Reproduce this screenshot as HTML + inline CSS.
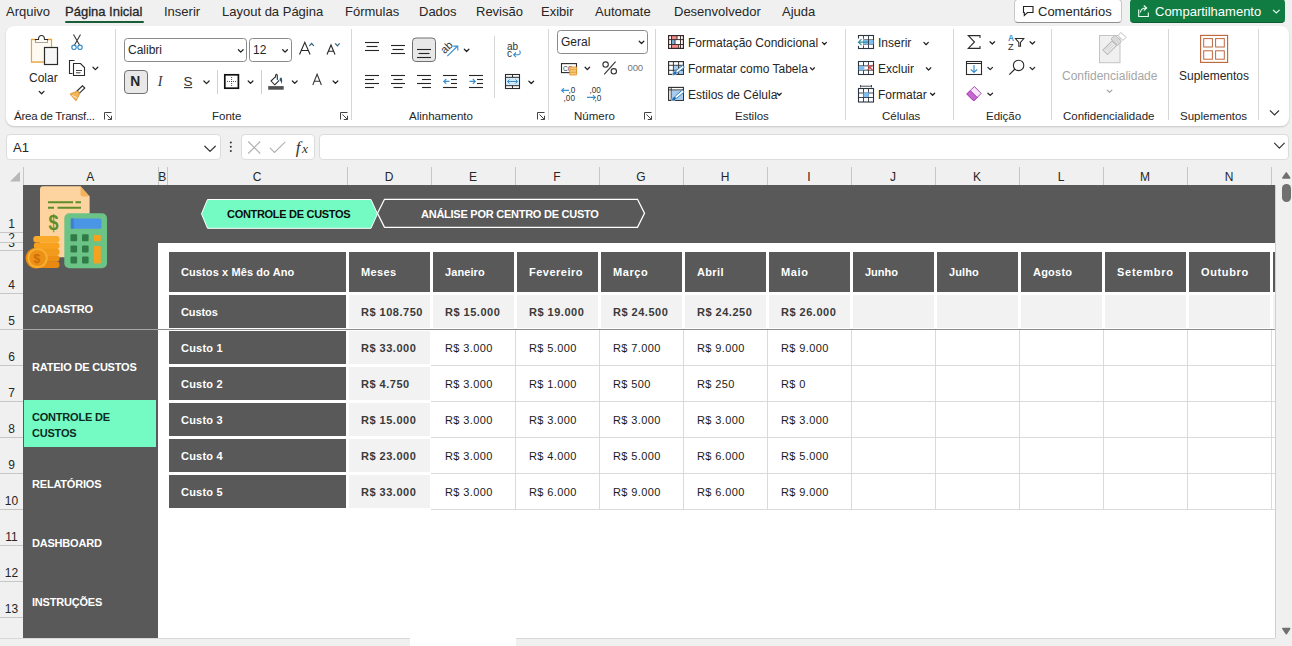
<!DOCTYPE html><html><head><meta charset="utf-8"><style>
*{box-sizing:border-box;margin:0;padding:0}
html,body{width:1292px;height:646px;overflow:hidden;background:#f0f0f0;font-family:"Liberation Sans",sans-serif;color:#262626}
.a{position:absolute}
.t{position:absolute;white-space:nowrap}
.tab{position:absolute;top:4px;font-size:13px;line-height:15px;white-space:nowrap;color:#262626}
#ribbon{position:absolute;left:6px;top:26px;width:1283px;height:100px;background:#fff;border-radius:8px;box-shadow:0 1px 2px rgba(0,0,0,.18)}
.sep{position:absolute;width:1px;background:#d6d6d6}
.glbl{position:absolute;top:110px;font-size:11.5px;line-height:12px;white-space:nowrap;color:#262626}
.rt{position:absolute;font-size:12px;line-height:14px;white-space:nowrap;color:#262626}
.box{position:absolute;background:#fff;border:1px solid #dcdcdc;border-radius:4px}
.ch{position:absolute;top:168px;height:18px;font-size:12px;line-height:18px;text-align:center;color:#262626}
.cs{position:absolute;top:167px;width:1px;height:18px;background:#c6c6c6}
.rh{position:absolute;left:0;width:23px;text-align:center;font-size:12px;line-height:14px;color:#262626}
.rs{position:absolute;left:0;width:23px;height:1px;background:#c6c6c6}
.dk{position:absolute;background:#595959}
.lg{position:absolute;background:#f2f2f2}
.gl{position:absolute;background:#dadada}
.nav{position:absolute;left:32px;font-size:11px;font-weight:bold;color:#fff;line-height:15.6px;letter-spacing:-0.2px;white-space:nowrap}
.hc{position:absolute;font-size:11px;font-weight:bold;color:#fff;line-height:14px;white-space:nowrap}
.nb{position:absolute;font-size:11px;font-weight:bold;color:#3a3a3a;line-height:14px;white-space:nowrap;letter-spacing:0.5px}
.nr{position:absolute;font-size:11px;color:#1a1a1a;line-height:14px;white-space:nowrap;letter-spacing:0.4px}
</style></head><body>
<div class="tab" style="left:6px">Arquivo</div>
<div class="tab" style="left:65px;-webkit-text-stroke:0.3px #262626">Página Inicial</div>
<div class="tab" style="left:164px">Inserir</div>
<div class="tab" style="left:222px">Layout da Página</div>
<div class="tab" style="left:345px">Fórmulas</div>
<div class="tab" style="left:419px">Dados</div>
<div class="tab" style="left:476px">Revisão</div>
<div class="tab" style="left:541px">Exibir</div>
<div class="tab" style="left:595px">Automate</div>
<div class="tab" style="left:674px">Desenvolvedor</div>
<div class="tab" style="left:782px">Ajuda</div>
<div class="a" style="left:65px;top:20.5px;width:79px;height:2.5px;background:#1a5e38;border-radius:1px"></div>
<div class="a" style="left:1014px;top:-1px;width:108px;height:24px;border:1px solid #c8c8c8;border-bottom-color:#8f8f8f;border-radius:4px;background:#fff"></div>
<div class="tab" style="left:1038px">Comentários</div>
<div class="a" style="left:1130px;top:-1px;width:155px;height:24px;background:#107c41;border-radius:4px;border-bottom:1px solid #0b5e31"></div>
<div class="tab" style="left:1155px;color:#fff">Compartilhamento</div>
<div id="ribbon"></div>
<div class="sep" style="left:115px;top:29px;height:91px"></div>
<div class="sep" style="left:351px;top:29px;height:91px"></div>
<div class="sep" style="left:548px;top:29px;height:91px"></div>
<div class="sep" style="left:655px;top:29px;height:91px"></div>
<div class="sep" style="left:845px;top:29px;height:91px"></div>
<div class="sep" style="left:953px;top:29px;height:91px"></div>
<div class="sep" style="left:1051px;top:29px;height:91px"></div>
<div class="sep" style="left:1168px;top:29px;height:91px"></div>
<div class="sep" style="left:1258px;top:29px;height:91px"></div>
<div class="glbl" style="left:14px;letter-spacing:-0.25px">Área de Transf...</div>
<div class="glbl" style="left:212px">Fonte</div>
<div class="glbl" style="left:409px">Alinhamento</div>
<div class="glbl" style="left:574px">Número</div>
<div class="glbl" style="left:735px">Estilos</div>
<div class="glbl" style="left:882px">Células</div>
<div class="glbl" style="left:986px">Edição</div>
<div class="glbl" style="left:1063px">Confidencialidade</div>
<div class="glbl" style="left:1180px">Suplementos</div>
<div class="rt" style="left:29px;top:71px;font-size:12px;color:#262626">Colar</div>
<div class="rt" style="left:128px;top:43px;font-size:12px;color:#262626">Calibri</div>
<div class="rt" style="left:253px;top:43px;font-size:12px;color:#262626">12</div>
<div class="rt" style="left:561px;top:35px;font-size:12px;color:#262626">Geral</div>
<div class="rt" style="left:688px;top:35.5px;font-size:12px;color:#262626">Formatação Condicional</div>
<div class="rt" style="left:688px;top:61.5px;font-size:12px;color:#262626">Formatar como Tabela</div>
<div class="rt" style="left:688px;top:87.5px;font-size:12px;color:#262626">Estilos de Célula</div>
<div class="rt" style="left:878px;top:35.5px;font-size:12px;color:#262626">Inserir</div>
<div class="rt" style="left:878px;top:61.5px;font-size:12px;color:#262626">Excluir</div>
<div class="rt" style="left:878px;top:87.5px;font-size:12px;color:#262626">Formatar</div>
<div class="rt" style="left:1062px;top:69px;font-size:12px;color:#a6a6a6">Confidencialidade</div>
<div class="rt" style="left:1179px;top:69px;font-size:12px;color:#262626">Suplementos</div>
<div class="box" style="left:6px;top:134px;width:215px;height:26px"></div>
<div class="t" style="left:13px;top:141px;font-size:13px;line-height:14px">A1</div>
<div class="box" style="left:241px;top:134px;width:74px;height:26px"></div>
<div class="box" style="left:319px;top:134px;width:970px;height:26px"></div>
<div class="a" style="left:0;top:167px;width:1275px;height:18px;background:#f0f0f0"></div>
<div class="ch" style="left:23px;width:134.5px">A</div>
<div class="cs" style="left:157.5px"></div>
<div class="ch" style="left:157.5px;width:9.5px">B</div>
<div class="cs" style="left:167px"></div>
<div class="ch" style="left:167px;width:180px">C</div>
<div class="cs" style="left:347px"></div>
<div class="ch" style="left:347px;width:84px">D</div>
<div class="cs" style="left:431px"></div>
<div class="ch" style="left:431px;width:84px">E</div>
<div class="cs" style="left:515px"></div>
<div class="ch" style="left:515px;width:84px">F</div>
<div class="cs" style="left:599px"></div>
<div class="ch" style="left:599px;width:84px">G</div>
<div class="cs" style="left:683px"></div>
<div class="ch" style="left:683px;width:84px">H</div>
<div class="cs" style="left:767px"></div>
<div class="ch" style="left:767px;width:84px">I</div>
<div class="cs" style="left:851px"></div>
<div class="ch" style="left:851px;width:84px">J</div>
<div class="cs" style="left:935px"></div>
<div class="ch" style="left:935px;width:84px">K</div>
<div class="cs" style="left:1019px"></div>
<div class="ch" style="left:1019px;width:84px">L</div>
<div class="cs" style="left:1103px"></div>
<div class="ch" style="left:1103px;width:84px">M</div>
<div class="cs" style="left:1187px"></div>
<div class="ch" style="left:1187px;width:84px">N</div>
<div class="cs" style="left:1271px"></div>
<div class="cs" style="left:23px"></div>
<svg class="a" style="left:0;top:0" width="1292" height="185" viewBox="0 0 1292 185"><path d="M35.5 39.5 H31.5 V62 H44" fill="none" stroke="#e9a53a" stroke-width="1.3"/><path d="M47.5 39.5 H51.5 V47" fill="none" stroke="#e9a53a" stroke-width="1.3"/><path d="M35.5 42.5 V39.5 H38.5 Q38.5 35.5 41.5 35.5 Q44.5 35.5 44.5 39.5 H47.5 V42.5 Z" fill="#fff" stroke="#2b2b2b" stroke-width="1.1"/><rect x="32.2" y="40.2" width="18.6" height="21" fill="#fdf6ea" opacity="0.6"/><rect x="44.5" y="47.5" width="13" height="17" fill="#f7f7f7" stroke="#2b2b2b" stroke-width="1.2"/><path d="M39.199999999999996 91.4 L41.599999999999994 93.80000000000001 L43.99999999999999 91.4" fill="none" stroke="#222" stroke-width="1.25" stroke-linecap="round" stroke-linejoin="round"/><path d="M73.5 34.5 L79.5 45 M80.5 34.5 L74.5 45" stroke="#3a3a3a" stroke-width="1.1" fill="none"/><circle cx="74" cy="47.3" r="2.2" fill="none" stroke="#3a8fd0" stroke-width="1.2"/><circle cx="80" cy="47.3" r="2.2" fill="none" stroke="#3a8fd0" stroke-width="1.2"/><path d="M74.5 60.5 H69.5 V73.5 H72.5" fill="none" stroke="#2b2b2b" stroke-width="1.1"/><path d="M73.5 63.5 H80.5 L84.5 67.5 V75.5 H73.5 Z" fill="#fff" stroke="#2b2b2b" stroke-width="1.1"/><path d="M76 70.5 H82 M76 72.8 H80.5" stroke="#2b2b2b" stroke-width="0.9"/><path d="M93.0 67.2 L95.4 69.60000000000001 L97.8 67.2" fill="none" stroke="#222" stroke-width="1.25" stroke-linecap="round" stroke-linejoin="round"/><path d="M77 91 L82.5 85.8 L84.8 88 L79.3 93.3 Z" fill="#fff" stroke="#2b2b2b" stroke-width="1.1"/><path d="M70 94 L77.5 91 L79.8 93.5 L76 100.8 Z" fill="#f2b45a" stroke="#e39a35" stroke-width="1"/><path d="M72.5 95.5 L77 98" stroke="#fff" stroke-width="0.8"/><rect x="124.5" y="38.5" width="122" height="23" rx="3" fill="none" stroke="#8a8a8a" stroke-width="1"/><path d="M238.4 49.7 L240.75 52.1 L243.1 49.7" fill="none" stroke="#222" stroke-width="1.25" stroke-linecap="round" stroke-linejoin="round"/><rect x="249.5" y="38.5" width="42" height="23" rx="3" fill="none" stroke="#8a8a8a" stroke-width="1"/><path d="M282.7 49.7 L285.05 52.1 L287.4 49.7" fill="none" stroke="#222" stroke-width="1.25" stroke-linecap="round" stroke-linejoin="round"/><path d="M299.5 54.5 L304.8 42.3 L310.1 54.5 M301.3 50.5 H308.3" fill="none" stroke="#262626" stroke-width="1.1"/><path d="M309.4 45.8 L311.6 43.4 L313.8 45.8" fill="none" stroke="#35607e" stroke-width="1.25"/><path d="M327 54.5 L331 45 L335 54.5 M328.4 51.2 H333.6" fill="none" stroke="#262626" stroke-width="1.1"/><path d="M335.2 43.4 L337.4 45.8 L339.6 43.4" fill="none" stroke="#35607e" stroke-width="1.25"/><rect x="124.5" y="70.5" width="23" height="23" rx="3.5" fill="#e8e8e8" stroke="#707070" stroke-width="1"/><text x="130.3" y="86.2" font-family="Liberation Sans" font-weight="bold" font-size="13.8" fill="#262626">N</text><text x="157.8" y="86.2" font-family="Liberation Serif" font-style="italic" font-size="14" fill="#333">I</text><text x="183.6" y="86.2" font-family="Liberation Sans" font-size="13.5" fill="#333">S</text><path d="M184 87.6 H192.2" stroke="#333" stroke-width="1.1"/><path d="M203.9 81.0 L206.5 83.6 L209.1 81.0" fill="none" stroke="#222" stroke-width="1.25" stroke-linecap="round" stroke-linejoin="round"/><rect x="224.8" y="74.8" width="13.6" height="13.4" fill="#fff" stroke="#111" stroke-width="1.7"/><path d="M231.6 77 V86.5 M227 81.5 H236.5" stroke="#444" stroke-width="0.9" stroke-dasharray="1 1"/><path d="M248.20000000000002 81.0 L250.55 83.4 L252.9 81.0" fill="none" stroke="#222" stroke-width="1.25" stroke-linecap="round" stroke-linejoin="round"/><path d="M275.6 76.6 L271 81 L274.8 84.8 L279.2 80.4" fill="none" stroke="#2b2b2b" stroke-width="1.05" stroke-linejoin="round"/><path d="M275.6 77 V75.2 Q276.4 73.6 277.3 75.2 V79.6" fill="none" stroke="#2b2b2b" stroke-width="1.05" stroke-linecap="round"/><path d="M279.4 79.3 Q280.6 76.6 281.8 78 Q282.8 80.2 281.4 84.3 Q281.2 81 280 80.6 Z" fill="#1f5a80"/><rect x="268.2" y="86.1" width="15.5" height="3.6" fill="#505050"/><path d="M292.4 81.0 L294.75 83.4 L297.09999999999997 81.0" fill="none" stroke="#222" stroke-width="1.25" stroke-linecap="round" stroke-linejoin="round"/><path d="M312.8 85 L317.1 74.2 L321.4 85 M314.3 81.3 H319.9" fill="none" stroke="#333" stroke-width="1.05"/><path d="M333.09999999999997 81.0 L335.45 83.4 L337.79999999999995 81.0" fill="none" stroke="#222" stroke-width="1.25" stroke-linecap="round" stroke-linejoin="round"/><path d="M217.5 70 V94 M261.5 70 V94" stroke="#d0d0d0" stroke-width="1"/><path d="M365 42.5 H379" stroke="#262626" stroke-width="1.1"/><path d="M366.5 46.5 H377.5" stroke="#262626" stroke-width="1.1"/><path d="M365 50.5 H379" stroke="#262626" stroke-width="1.1"/><path d="M391 45.5 H405" stroke="#262626" stroke-width="1.1"/><path d="M392.5 49.5 H403.5" stroke="#262626" stroke-width="1.1"/><path d="M391 53.5 H405" stroke="#262626" stroke-width="1.1"/><rect x="412.5" y="38" width="23" height="23.5" rx="3.5" fill="#e8e8e8" stroke="#707070" stroke-width="1"/><path d="M417 49.5 H431" stroke="#262626" stroke-width="1.1"/><path d="M418.5 53.5 H429.5" stroke="#262626" stroke-width="1.1"/><path d="M417 57.5 H431" stroke="#262626" stroke-width="1.1"/><text x="0" y="0" transform="translate(444.8 54.3) rotate(-45)" font-family="Liberation Sans" font-size="11" fill="#333">ab</text><path d="M447.3 56.2 L457.6 46 M453.2 46.1 H457.8 V50.6" fill="none" stroke="#3a8fd0" stroke-width="1.1"/><path d="M464.29999999999995 49.2 L466.59999999999997 51.5 L468.9 49.2" fill="none" stroke="#222" stroke-width="1.25" stroke-linecap="round" stroke-linejoin="round"/><path d="M365 75.5 H379" stroke="#262626" stroke-width="1.1"/><path d="M365 79.5 H374" stroke="#262626" stroke-width="1.1"/><path d="M365 83.5 H379" stroke="#262626" stroke-width="1.1"/><path d="M365 87.5 H374" stroke="#262626" stroke-width="1.1"/><path d="M391 75.5 H405" stroke="#262626" stroke-width="1.1"/><path d="M393.5 79.5 H402.5" stroke="#262626" stroke-width="1.1"/><path d="M391 83.5 H405" stroke="#262626" stroke-width="1.1"/><path d="M393.5 87.5 H402.5" stroke="#262626" stroke-width="1.1"/><path d="M417 75.5 H431" stroke="#262626" stroke-width="1.1"/><path d="M422 79.5 H431" stroke="#262626" stroke-width="1.1"/><path d="M417 83.5 H431" stroke="#262626" stroke-width="1.1"/><path d="M422 87.5 H431" stroke="#262626" stroke-width="1.1"/><path d="M443 75.5 H457" stroke="#262626" stroke-width="1.1"/><path d="M451 79.5 H457" stroke="#262626" stroke-width="1.1"/><path d="M451 83.5 H457" stroke="#262626" stroke-width="1.1"/><path d="M443 87.5 H457" stroke="#262626" stroke-width="1.1"/><path d="M449.5 81.4 H443.8 M446.3 79 L443.8 81.4 L446.3 83.8" fill="none" stroke="#3a8fd0" stroke-width="1.1"/><path d="M469 75.5 H483" stroke="#262626" stroke-width="1.1"/><path d="M477 79.5 H483" stroke="#262626" stroke-width="1.1"/><path d="M477 83.5 H483" stroke="#262626" stroke-width="1.1"/><path d="M469 87.5 H483" stroke="#262626" stroke-width="1.1"/><path d="M469.5 81.4 H475.3 M472.8 79 L475.3 81.4 L472.8 83.8" fill="none" stroke="#3a8fd0" stroke-width="1.1"/><path d="M494.5 36 V98" stroke="#d6d6d6" stroke-width="1"/><text x="507" y="49.6" font-family="Liberation Sans" font-size="10" fill="#333">ab</text><text x="507" y="56.6" font-family="Liberation Sans" font-size="10" fill="#333">c</text><path d="M519.5 50.5 Q521.5 53.5 518.5 54.8 H513.8 M516 52.5 L513.6 54.8 L516 57.2" fill="none" stroke="#3a8fd0" stroke-width="1.1"/><rect x="505.5" y="74.5" width="14" height="14" fill="#fff" stroke="#2b2b2b" stroke-width="1.1"/><rect x="506" y="77.3" width="13" height="8.4" fill="#d3e9f8"/><path d="M505.5 77.3 H519.5 M505.5 85.7 H519.5 M512.5 74.5 V77.3 M512.5 85.7 V88.5" stroke="#2b2b2b" stroke-width="1"/><path d="M507.5 81.5 H517.5 M509.5 79.5 L507.5 81.5 L509.5 83.5 M515.5 79.5 L517.5 81.5 L515.5 83.5" fill="none" stroke="#3a8fd0" stroke-width="1"/><path d="M528.9 81.2 L531.25 83.5 L533.6 81.2" fill="none" stroke="#222" stroke-width="1.25" stroke-linecap="round" stroke-linejoin="round"/><rect x="557.5" y="30.5" width="90" height="23" rx="3" fill="none" stroke="#8a8a8a" stroke-width="1"/><path d="M639.1999999999999 41.2 L641.4999999999999 43.5 L643.8 41.2" fill="none" stroke="#222" stroke-width="1.25" stroke-linecap="round" stroke-linejoin="round"/><rect x="561.5" y="63.6" width="15" height="9" fill="#fff" stroke="#2b2b2b" stroke-width="1.1"/><text x="563" y="71" font-family="Liberation Sans" font-size="6.5" fill="#333">CC</text><path d="M569.8 67 H576.5 V75 H569.8 Z" fill="#f8c87a" stroke="#e39a35" stroke-width="0.9"/><path d="M569.8 69.6 H576.5 M569.8 72.3 H576.5" stroke="#e39a35" stroke-width="0.8"/><path d="M585.1 67.2 L587.35 69.60000000000001 L589.6 67.2" fill="none" stroke="#222" stroke-width="1.25" stroke-linecap="round" stroke-linejoin="round"/><circle cx="605.6" cy="64.6" r="2.7" fill="none" stroke="#333" stroke-width="1.1"/><circle cx="613.8" cy="71.3" r="2.7" fill="none" stroke="#333" stroke-width="1.1"/><path d="M615.6 61.6 L604.2 74.4" stroke="#333" stroke-width="1.1"/><text x="627.5" y="71" font-family="Liberation Sans" font-size="9.6" fill="#777" letter-spacing="-0.2">000</text><path d="M569 90.4 H561.6 M564 88.2 L561.6 90.4 L564 92.6" fill="none" stroke="#3a8fd0" stroke-width="1.1"/><text x="568.6" y="92.5" font-family="Liberation Sans" font-size="8.2" fill="#333">,0</text><text x="563.6" y="101" font-family="Liberation Sans" font-size="8.2" fill="#333">,00</text><text x="589.5" y="92.5" font-family="Liberation Sans" font-size="8.2" fill="#333">,00</text><path d="M587 97.4 H595.4 M593 95.2 L595.4 97.4 L593 99.6" fill="none" stroke="#3a8fd0" stroke-width="1.1"/><text x="594.6" y="101" font-family="Liberation Sans" font-size="8.2" fill="#333">,0</text><rect x="672" y="36" width="4.8" height="3.4" fill="#f58a8a"/><rect x="672" y="45" width="6.4" height="3.2" fill="#f58a8a"/><rect x="672" y="40" width="2.8" height="4.3" fill="#6fb0d8"/><rect x="668.6" y="35.6" width="14.8" height="12.8" fill="none" stroke="#3a2626" stroke-width="1.2"/><path d="M668.6 39.6 H683.4 M668.6 44.5 H683.4 M671.5 35.6 V48.4 M680.5 35.6 V48.4 M677 35.6 V39.6 M675 39.6 V44.5 M678.7 44.5 V48.4" stroke="#3a2626" stroke-width="0.95"/><rect x="668.6" y="61.6" width="14.8" height="12.8" fill="#fff" stroke="#2b2b2b" stroke-width="1.1"/><rect x="673.8" y="65.6" width="9.2" height="8.4" fill="#a6cdf0"/><path d="M668.6 65.3 H683.4 M668.6 70.3 H683.4 M673.4 61.6 V74.4 M678.6 61.6 V74.4" stroke="#2b2b2b" stroke-width="0.9"/><g transform="translate(672.2 75.2) rotate(-38)"><path d="M0 0.2 Q1.5 -2.6 5.2 -1.7 L5.2 1.7 Q2 2.4 0 0.2 Z" fill="#1f6fb5" stroke="#fff" stroke-width="0.5"/><rect x="5.2" y="-1.3" width="9.3" height="2.6" rx="1" fill="#fff" stroke="#2f7fc0" stroke-width="0.9"/></g><rect x="668.6" y="87.4" width="14.8" height="13" fill="#fff" stroke="#2b2b2b" stroke-width="1.1"/><rect x="671.8" y="90.3" width="11.2" height="9.7" fill="#a6cdf0"/><path d="M668.6 89.9 H683.4 M671.2 87.4 V100.4" stroke="#2b2b2b" stroke-width="0.9"/><g transform="translate(671.5 100.9) rotate(-40)"><path d="M0 0.2 Q1.5 -2.6 5.2 -1.7 L5.2 1.7 Q2 2.4 0 0.2 Z" fill="#1f6fb5" stroke="#fff" stroke-width="0.5"/><rect x="5.2" y="-1.3" width="10.3" height="2.6" rx="1" fill="#fff" stroke="#2f7fc0" stroke-width="0.9"/></g><path d="M822.4 42.400000000000006 L824.4 44.50000000000001 L826.4 42.400000000000006" fill="none" stroke="#222" stroke-width="1.25" stroke-linecap="round" stroke-linejoin="round"/><path d="M810.4 67.8 L812.4 69.89999999999999 L814.4 67.8" fill="none" stroke="#222" stroke-width="1.25" stroke-linecap="round" stroke-linejoin="round"/><path d="M777.1999999999999 93.2 L779.1999999999999 95.3 L781.1999999999999 93.2" fill="none" stroke="#222" stroke-width="1.25" stroke-linecap="round" stroke-linejoin="round"/><rect x="858.5" y="35.5" width="15" height="13" fill="#fff" stroke="#2b3540" stroke-width="1.1"/><path d="M858.5 39.833333333333336 H873.5 M858.5 44.166666666666664 H873.5 M863.5 35.5 V48.5 M868.5 35.5 V48.5" stroke="#2b3540" stroke-width="0.9"/><rect x="864" y="40" width="9.5" height="4.3" fill="#7fbdf0"/><path d="M863.3 40 V44.4 M868.5 40 V44.4" stroke="#2b3540" stroke-width="0.9"/><rect x="857.5" y="38.5" width="6" height="7.4" fill="#fff"/><path d="M868 42.2 H858.5 M861.5 39.2 L858.5 42.2 L861.5 45.2" fill="none" stroke="#2f8f9f" stroke-width="1.2"/><path d="M923.9 42.400000000000006 L926.1 44.7 L928.3 42.400000000000006" fill="none" stroke="#222" stroke-width="1.25" stroke-linecap="round" stroke-linejoin="round"/><rect x="858.5" y="61.5" width="15" height="13" fill="#fff" stroke="#2b3540" stroke-width="1.1"/><path d="M858.5 65.83333333333333 H873.5 M858.5 70.16666666666667 H873.5 M863.5 61.5 V74.5 M868.5 61.5 V74.5" stroke="#2b3540" stroke-width="0.9"/><rect x="858.8" y="66" width="5.5" height="4.3" fill="#7fbdf0"/><path d="M867.5 65 L872.5 70 M872.5 65 L867.5 70" stroke="#e04848" stroke-width="1.1"/><path d="M926.4 67.8 L928.6 70.1 L930.8 67.8" fill="none" stroke="#222" stroke-width="1.25" stroke-linecap="round" stroke-linejoin="round"/><rect x="858.5" y="88.5" width="15" height="13.5" fill="#fff" stroke="#2b3540" stroke-width="1.1"/><path d="M858.5 93.0 H873.5 M858.5 97.5 H873.5 M863.5 88.5 V102.0 M868.5 88.5 V102.0" stroke="#2b3540" stroke-width="0.9"/><rect x="863.5" y="92.5" width="5.3" height="4.5" fill="#7fbdf0"/><path d="M860.5 86.2 H871.5 M860.5 85 V87.4 M871.5 85 V87.4" stroke="#2b3540" stroke-width="0.9"/><path d="M930.6 93.2 L932.6 95.3 L934.6 93.2" fill="none" stroke="#222" stroke-width="1.25" stroke-linecap="round" stroke-linejoin="round"/><path d="M980 38 V35.6 H968.3 L974.5 42 L968.3 48.4 H980 V46" fill="none" stroke="#2b2b2b" stroke-width="1.1"/><path d="M990.0 41.800000000000004 L992.3 44.00000000000001 L994.6 41.800000000000004" fill="none" stroke="#222" stroke-width="1.25" stroke-linecap="round" stroke-linejoin="round"/><text x="1007.9" y="40.9" font-family="Liberation Sans" font-size="8.4" font-weight="bold" fill="#3a8fd0">A</text><text x="1008" y="49.9" font-family="Liberation Sans" font-size="9.2" fill="#2b2b2b">Z</text><path d="M1015.5 38.5 H1023.8 L1020.5 42.5 V46.3 H1018.8 V42.5 Z" fill="#fff" stroke="#2b2b2b" stroke-width="1.1"/><path d="M1030.1000000000001 41.800000000000004 L1032.4 44.00000000000001 L1034.7 41.800000000000004" fill="none" stroke="#222" stroke-width="1.25" stroke-linecap="round" stroke-linejoin="round"/><rect x="966.5" y="61.5" width="15" height="13" fill="#fff" stroke="#2b2b2b" stroke-width="1.1"/><path d="M966.5 63.5 H981.5" stroke="#2b2b2b" stroke-width="1"/><path d="M974 65 V72.5 M970.8 69.3 L974 72.5 L977.2 69.3" fill="none" stroke="#3a8fd0" stroke-width="1.2"/><path d="M987.9 67.4 L990.1999999999999 69.60000000000001 L992.5 67.4" fill="none" stroke="#222" stroke-width="1.25" stroke-linecap="round" stroke-linejoin="round"/><circle cx="1018.6" cy="65.4" r="5.2" fill="none" stroke="#2b2b2b" stroke-width="1.1"/><path d="M1015 69 L1009.3 74.7" stroke="#2b2b2b" stroke-width="1.2"/><path d="M1030.1000000000001 67.4 L1032.4 69.60000000000001 L1034.7 67.4" fill="none" stroke="#222" stroke-width="1.25" stroke-linecap="round" stroke-linejoin="round"/><path d="M966.8 94 L974.3 86.5 L981.2 93.4 L973.7 100.9 Z" fill="#fbe6fb" stroke="#a347b5" stroke-width="1"/><path d="M966.8 94 L970.3 90.5 L977.2 97.4 L973.7 100.9 Z" fill="#c766d1" stroke="#a347b5" stroke-width="1"/><path d="M987.9 93.2 L990.1999999999999 95.4 L992.5 93.2" fill="none" stroke="#222" stroke-width="1.25" stroke-linecap="round" stroke-linejoin="round"/><rect x="1099.5" y="35.5" width="20.5" height="27.2" fill="#f0f0f0" stroke="#c4c4c4" stroke-width="1"/><path d="M1103 50 L1112 41 L1116.5 45.5 L1107.5 54.5 Z" fill="#f0f0f0" stroke="#bdbdbd" stroke-width="1.1"/><path d="M1105.5 50 L1112 43.5 M1107 51.5 L1113.5 45" stroke="#bdbdbd" stroke-width="0.9"/><path d="M1111 39 L1115 35 L1121.5 41.5 L1117.5 45.5 Z" fill="#d9d9d9" stroke="#bdbdbd" stroke-width="1"/><path d="M1118 35.5 L1121 32.5 L1126 37.5 L1123 40.5 Z" fill="#fff" stroke="#bdbdbd" stroke-width="1"/><path d="M1107.2 90.2 L1109.5 92.4 L1111.8 90.2" fill="none" stroke="#a8a8a8" stroke-width="1.25" stroke-linecap="round" stroke-linejoin="round"/><rect x="1200.6" y="35.4" width="27" height="27" fill="#fff" stroke="#c0673e" stroke-width="1.15"/><rect x="1203.7" y="38.6" width="8.7" height="8.4" fill="#fff" stroke="#c0673e" stroke-width="1"/><rect x="1215.6" y="38.6" width="8.7" height="8.4" fill="#fff" stroke="#c0673e" stroke-width="1"/><rect x="1203.7" y="50.8" width="8.7" height="8.4" fill="#fff" stroke="#c0673e" stroke-width="1"/><rect x="1215.6" y="50.8" width="8.7" height="8.4" fill="#fff" stroke="#c0673e" stroke-width="1"/><path d="M1270 110.5 L1274.5 115 L1279 110.5" fill="none" stroke="#333" stroke-width="1.1"/><path d="M104.5 119.5 V112.5 H111.5 M106.5 114.5 L111.5 119.5 M111.5 115.8 V119.5 H107.8" fill="none" stroke="#444" stroke-width="1"/><path d="M340.5 119.5 V112.5 H347.5 M342.5 114.5 L347.5 119.5 M347.5 115.8 V119.5 H343.8" fill="none" stroke="#444" stroke-width="1"/><path d="M537.5 119.5 V112.5 H544.5 M539.5 114.5 L544.5 119.5 M544.5 115.8 V119.5 H540.8" fill="none" stroke="#444" stroke-width="1"/><path d="M644.5 119.5 V112.5 H651.5 M646.5 114.5 L651.5 119.5 M651.5 115.8 V119.5 H647.8" fill="none" stroke="#444" stroke-width="1"/><path d="M1023.5 6.5 H1033 V12.5 H1027.5 L1024.3 15.5 V12.5 H1023.5 Z" fill="none" stroke="#222" stroke-width="1.1" stroke-linejoin="miter"/><path d="M1138.7 9.5 V16.5 H1148.3 V12.5" fill="none" stroke="#eafff2" stroke-width="1.1"/><path d="M1140.3 12.5 Q1141 8 1146 8 M1143.8 5.5 L1146.7 8 L1143.8 10.6" fill="none" stroke="#eafff2" stroke-width="1.1"/><path d="M1273 9.8 L1276.3 13 L1279.6 9.8" fill="none" stroke="#eafff2" stroke-width="1.1"/><path d="M210 147 L204.8 152" stroke="none"/><path d="M204.8 146.2 L210.05 151.39999999999998 L215.3 146.2" fill="none" stroke="#333" stroke-width="1.2" stroke-linecap="round" stroke-linejoin="round"/><path d="M1274.5 143.2 L1279.4 148.1 L1284.3 143.2" fill="none" stroke="#333" stroke-width="1.2" stroke-linecap="round" stroke-linejoin="round"/><circle cx="230.8" cy="142.5" r="1" fill="#333"/><circle cx="230.8" cy="146.8" r="1" fill="#333"/><circle cx="230.8" cy="151.1" r="1" fill="#333"/><path d="M248.2 141.5 L260.2 153.5 M260.2 141.5 L248.2 153.5" stroke="#b0b0b0" stroke-width="1.1"/><path d="M270 147.8 L274.5 152.5 L285.3 141.8" fill="none" stroke="#b0b0b0" stroke-width="1.1"/><text x="295.8" y="152.8" font-family="Liberation Serif" font-style="italic" font-size="17" fill="#333">f</text><text x="302" y="152.8" font-family="Liberation Serif" font-style="italic" font-size="13.5" fill="#333">x</text><path d="M20 171.5 V181.5 H10 Z" fill="#b8b8b8"/></svg>
<div class="a" style="left:0;top:185px;width:23px;height:47px;overflow:hidden"><div class="rh" style="top:32px">1</div></div>
<div class="rs" style="top:232px"></div>
<div class="a" style="left:0;top:232px;width:23px;height:7px;overflow:hidden"><div class="rh" style="top:-1px">2</div></div>
<div class="rs" style="top:242px"></div>
<div class="a" style="left:0;top:243px;width:23px;height:7px;overflow:hidden"><div class="rh" style="top:-7px">3</div></div>
<div class="rs" style="top:250px"></div>
<div class="a" style="left:0;top:251px;width:23px;height:42px;overflow:hidden"><div class="rh" style="top:27px">4</div></div>
<div class="rs" style="top:293px"></div>
<div class="a" style="left:0;top:294px;width:23px;height:35px;overflow:hidden"><div class="rh" style="top:20px">5</div></div>
<div class="rs" style="top:329px"></div>
<div class="a" style="left:0;top:330px;width:23px;height:35px;overflow:hidden"><div class="rh" style="top:20px">6</div></div>
<div class="rs" style="top:365px"></div>
<div class="a" style="left:0;top:366px;width:23px;height:35px;overflow:hidden"><div class="rh" style="top:20px">7</div></div>
<div class="rs" style="top:401px"></div>
<div class="a" style="left:0;top:402px;width:23px;height:35px;overflow:hidden"><div class="rh" style="top:20px">8</div></div>
<div class="rs" style="top:437px"></div>
<div class="a" style="left:0;top:438px;width:23px;height:35px;overflow:hidden"><div class="rh" style="top:20px">9</div></div>
<div class="rs" style="top:473px"></div>
<div class="a" style="left:0;top:474px;width:23px;height:35px;overflow:hidden"><div class="rh" style="top:20px">10</div></div>
<div class="rs" style="top:509px"></div>
<div class="a" style="left:0;top:510px;width:23px;height:35px;overflow:hidden"><div class="rh" style="top:20px">11</div></div>
<div class="rs" style="top:545px"></div>
<div class="a" style="left:0;top:546px;width:23px;height:35px;overflow:hidden"><div class="rh" style="top:20px">12</div></div>
<div class="rs" style="top:581px"></div>
<div class="a" style="left:0;top:582px;width:23px;height:35px;overflow:hidden"><div class="rh" style="top:20px">13</div></div>
<div class="rs" style="top:617px"></div>
<div class="a" style="left:0;top:618px;width:23px;height:35px;overflow:hidden"><div class="rh" style="top:20px">14</div></div>
<div class="rs" style="top:653px"></div>
<div class="a" style="left:23px;top:185px;width:1252px;height:453px;background:#fff"></div>
<div class="dk" style="left:23px;top:185px;width:1252px;height:58px"></div>
<div class="dk" style="left:23px;top:185px;width:135px;height:453px"></div>
<div class="a" style="left:24px;top:400px;width:132px;height:47px;background:#74fbc4"></div>
<div class="gl" style="left:431px;top:365px;width:844px;height:1px"></div>
<div class="gl" style="left:431px;top:401px;width:844px;height:1px"></div>
<div class="gl" style="left:431px;top:437px;width:844px;height:1px"></div>
<div class="gl" style="left:431px;top:473px;width:844px;height:1px"></div>
<div class="gl" style="left:431px;top:509px;width:844px;height:1px"></div>
<div class="gl" style="left:515px;top:330px;width:1px;height:180px"></div>
<div class="gl" style="left:599px;top:330px;width:1px;height:180px"></div>
<div class="gl" style="left:683px;top:330px;width:1px;height:180px"></div>
<div class="gl" style="left:767px;top:330px;width:1px;height:180px"></div>
<div class="gl" style="left:851px;top:330px;width:1px;height:180px"></div>
<div class="gl" style="left:935px;top:330px;width:1px;height:180px"></div>
<div class="gl" style="left:1019px;top:330px;width:1px;height:180px"></div>
<div class="gl" style="left:1103px;top:330px;width:1px;height:180px"></div>
<div class="gl" style="left:1187px;top:330px;width:1px;height:180px"></div>
<div class="gl" style="left:1271px;top:330px;width:1px;height:180px"></div>
<div class="dk" style="left:169px;top:252px;width:177px;height:40px"></div>
<div class="dk" style="left:349px;top:252px;width:81px;height:40px"></div>
<div class="dk" style="left:433px;top:252px;width:81px;height:40px"></div>
<div class="dk" style="left:517px;top:252px;width:81px;height:40px"></div>
<div class="dk" style="left:601px;top:252px;width:81px;height:40px"></div>
<div class="dk" style="left:685px;top:252px;width:81px;height:40px"></div>
<div class="dk" style="left:769px;top:252px;width:81px;height:40px"></div>
<div class="dk" style="left:853px;top:252px;width:81px;height:40px"></div>
<div class="dk" style="left:937px;top:252px;width:81px;height:40px"></div>
<div class="dk" style="left:1021px;top:252px;width:81px;height:40px"></div>
<div class="dk" style="left:1105px;top:252px;width:81px;height:40px"></div>
<div class="dk" style="left:1189px;top:252px;width:81px;height:40px"></div>
<div class="dk" style="left:169px;top:295px;width:177px;height:33px"></div>
<div class="lg" style="left:349px;top:295px;width:81px;height:33px"></div>
<div class="lg" style="left:433px;top:295px;width:81px;height:33px"></div>
<div class="lg" style="left:517px;top:295px;width:81px;height:33px"></div>
<div class="lg" style="left:601px;top:295px;width:81px;height:33px"></div>
<div class="lg" style="left:685px;top:295px;width:81px;height:33px"></div>
<div class="lg" style="left:769px;top:295px;width:81px;height:33px"></div>
<div class="lg" style="left:853px;top:295px;width:81px;height:33px"></div>
<div class="lg" style="left:937px;top:295px;width:81px;height:33px"></div>
<div class="lg" style="left:1021px;top:295px;width:81px;height:33px"></div>
<div class="lg" style="left:1105px;top:295px;width:81px;height:33px"></div>
<div class="lg" style="left:1189px;top:295px;width:81px;height:33px"></div>
<div class="dk" style="left:169px;top:331px;width:177px;height:33px"></div>
<div class="lg" style="left:349px;top:331px;width:81px;height:33px"></div>
<div class="dk" style="left:169px;top:367px;width:177px;height:33px"></div>
<div class="lg" style="left:349px;top:367px;width:81px;height:33px"></div>
<div class="dk" style="left:169px;top:403px;width:177px;height:33px"></div>
<div class="lg" style="left:349px;top:403px;width:81px;height:33px"></div>
<div class="dk" style="left:169px;top:439px;width:177px;height:33px"></div>
<div class="lg" style="left:349px;top:439px;width:81px;height:33px"></div>
<div class="dk" style="left:169px;top:475px;width:177px;height:33px"></div>
<div class="lg" style="left:349px;top:475px;width:81px;height:33px"></div>
<div class="dk" style="left:1273px;top:252px;width:2px;height:40px"></div>
<div class="lg" style="left:1273px;top:295px;width:2px;height:33px"></div>
<div class="a" style="left:23px;top:329px;width:135px;height:1px;background:#a6a6a6"></div>
<div class="a" style="left:158px;top:329px;width:1117px;height:1px;background:#8c8c8c"></div>
<div class="hc" style="left:181px;top:265px;letter-spacing:0.1px">Custos x Mês do Ano</div>
<div class="hc" style="left:361px;top:265px;letter-spacing:0.4px">Meses</div>
<div class="hc" style="left:445px;top:265px;letter-spacing:0.08px">Janeiro</div>
<div class="hc" style="left:529px;top:265px;letter-spacing:0.5px">Fevereiro</div>
<div class="hc" style="left:613px;top:265px;letter-spacing:0.55px">Março</div>
<div class="hc" style="left:697px;top:265px;letter-spacing:0.35px">Abril</div>
<div class="hc" style="left:781px;top:265px;letter-spacing:0.66px">Maio</div>
<div class="hc" style="left:865px;top:265px;letter-spacing:0px">Junho</div>
<div class="hc" style="left:949px;top:265px;letter-spacing:0.1px">Julho</div>
<div class="hc" style="left:1033px;top:265px;letter-spacing:0.22px">Agosto</div>
<div class="hc" style="left:1117px;top:265px;letter-spacing:0.75px">Setembro</div>
<div class="hc" style="left:1201px;top:265px;letter-spacing:0.63px">Outubro</div>
<div class="hc" style="left:181px;top:305px;letter-spacing:-0.1px">Custos</div>
<div class="nb" style="left:361px;top:305px">R$ 108.750</div>
<div class="nb" style="left:445px;top:305px">R$ 15.000</div>
<div class="nb" style="left:529px;top:305px">R$ 19.000</div>
<div class="nb" style="left:613px;top:305px">R$ 24.500</div>
<div class="nb" style="left:697px;top:305px">R$ 24.250</div>
<div class="nb" style="left:781px;top:305px">R$ 26.000</div>
<div class="hc" style="left:181px;top:341px;letter-spacing:0.2px">Custo 1</div>
<div class="nb" style="left:361px;top:341px">R$ 33.000</div>
<div class="nr" style="left:445px;top:341px">R$ 3.000</div>
<div class="nr" style="left:529px;top:341px">R$ 5.000</div>
<div class="nr" style="left:613px;top:341px">R$ 7.000</div>
<div class="nr" style="left:697px;top:341px">R$ 9.000</div>
<div class="nr" style="left:781px;top:341px">R$ 9.000</div>
<div class="hc" style="left:181px;top:377px;letter-spacing:0.2px">Custo 2</div>
<div class="nb" style="left:361px;top:377px">R$ 4.750</div>
<div class="nr" style="left:445px;top:377px">R$ 3.000</div>
<div class="nr" style="left:529px;top:377px">R$ 1.000</div>
<div class="nr" style="left:613px;top:377px">R$ 500</div>
<div class="nr" style="left:697px;top:377px">R$ 250</div>
<div class="nr" style="left:781px;top:377px">R$ 0</div>
<div class="hc" style="left:181px;top:413px;letter-spacing:0.2px">Custo 3</div>
<div class="nb" style="left:361px;top:413px">R$ 15.000</div>
<div class="nr" style="left:445px;top:413px">R$ 3.000</div>
<div class="nr" style="left:529px;top:413px">R$ 3.000</div>
<div class="nr" style="left:613px;top:413px">R$ 3.000</div>
<div class="nr" style="left:697px;top:413px">R$ 3.000</div>
<div class="nr" style="left:781px;top:413px">R$ 3.000</div>
<div class="hc" style="left:181px;top:449px;letter-spacing:0.2px">Custo 4</div>
<div class="nb" style="left:361px;top:449px">R$ 23.000</div>
<div class="nr" style="left:445px;top:449px">R$ 3.000</div>
<div class="nr" style="left:529px;top:449px">R$ 4.000</div>
<div class="nr" style="left:613px;top:449px">R$ 5.000</div>
<div class="nr" style="left:697px;top:449px">R$ 6.000</div>
<div class="nr" style="left:781px;top:449px">R$ 5.000</div>
<div class="hc" style="left:181px;top:485px;letter-spacing:0.2px">Custo 5</div>
<div class="nb" style="left:361px;top:485px">R$ 33.000</div>
<div class="nr" style="left:445px;top:485px">R$ 3.000</div>
<div class="nr" style="left:529px;top:485px">R$ 6.000</div>
<div class="nr" style="left:613px;top:485px">R$ 9.000</div>
<div class="nr" style="left:697px;top:485px">R$ 6.000</div>
<div class="nr" style="left:781px;top:485px">R$ 9.000</div>
<svg class="a" style="left:0;top:0" width="160" height="275" viewBox="0 0 160 275">
<path d="M43 186.3 H80.5 L89.6 196.5 V254 Q89.6 257.2 86.5 257.2 H43 Q40 257.2 40 254 V189.5 Q40 186.3 43 186.3 Z" fill="#fdd4a0"/>
<path d="M80.5 186.3 V194 Q80.5 196.5 83 196.5 H89.6 Z" fill="#f6b15e"/>
<path d="M48 202.3 H73 M75.5 202.3 H81 M48 207.8 H54 M57.5 207.8 H81" stroke="#5e8d2b" stroke-width="1.9"/>
<text x="0" y="0" transform="translate(48.6 230) scale(0.82 1)" font-family="Liberation Sans" font-weight="bold" font-size="22" fill="#5e8d2b">$</text>
<rect x="64.3" y="213.3" width="42.7" height="55" rx="5" fill="#6cc386"/>
<rect x="70.8" y="218.5" width="30.7" height="10.2" rx="1.5" fill="#4b95e6"/>
<rect x="70.8" y="218.5" width="3" height="10.2" fill="#3f7fd0"/>
<g fill="#2f7a47">
<rect x="70.5" y="234.3" width="6.6" height="7" rx="1"/><rect x="82" y="234.3" width="6.6" height="7" rx="1"/>
<rect x="70.5" y="245.4" width="6.6" height="7" rx="1"/><rect x="82" y="245.4" width="6.6" height="7" rx="1"/>
<rect x="70.5" y="256.5" width="6.6" height="7" rx="1"/><rect x="82" y="256.5" width="6.6" height="7" rx="1"/>
</g>
<rect x="93.8" y="235" width="7" height="6.2" rx="1" fill="#f7a21f"/>
<rect x="93.8" y="246" width="7" height="17.5" rx="1" fill="#f7a21f"/>
<rect x="33.3" y="236" width="26.2" height="6.6" rx="3" fill="#f9aa2a"/>
<rect x="33.8" y="242.4" width="25.7" height="6.6" rx="3" fill="#f7a11f"/>
<rect x="33.3" y="248.8" width="26.2" height="6.6" rx="3" fill="#f29a1a"/>
<rect x="33.8" y="255.2" width="25.7" height="6.6" rx="3" fill="#ec9115"/>
<rect x="33.3" y="261.4" width="26.2" height="6.6" rx="3" fill="#e88a12"/>
<circle cx="36" cy="258.2" r="10.4" fill="#e88a12"/>
<circle cx="37.6" cy="258.1" r="10.2" fill="#f7b031"/>
<circle cx="37.6" cy="258.1" r="8.2" fill="#ec9116"/>
<text x="33.6" y="263.2" font-family="Liberation Sans" font-weight="bold" font-size="12" fill="#c86e0a">$</text>
</svg>
<div class="nav" style="left:32px;top:302px">CADASTRO</div>
<div class="nav" style="left:32px;top:360px">RATEIO DE CUSTOS</div>
<div class="nav" style="left:32px;top:410px;color:#0d2b1f">CONTROLE DE<br>CUSTOS</div>
<div class="nav" style="left:32px;top:477px">RELATÓRIOS</div>
<div class="nav" style="left:32px;top:536px">DASHBOARD</div>
<div class="nav" style="left:32px;top:595px">INSTRUÇÕES</div>
<svg class="a" style="left:195px;top:195px" width="460" height="40" viewBox="195 195 460 40">
<polygon points="201.5,213.8 207.5,199.5 371,199.5 377.5,213.8 371,228.3 207.5,228.3" fill="#74fbc4" stroke="#fff" stroke-width="1"/>
<polygon points="377.5,213.3 384.5,199.3 637.5,199.3 644.5,213.3 637.5,227.3 384.5,227.3" fill="none" stroke="#fff" stroke-width="1.3"/>
</svg>
<div class="hc" style="left:227px;top:207px;color:#0d0d0d;letter-spacing:-0.3px">CONTROLE DE CUSTOS</div>
<div class="hc" style="left:421px;top:207px;letter-spacing:-0.25px">ANÁLISE POR CENTRO DE CUSTO</div>
<div class="a" style="left:1275px;top:160px;width:17px;height:486px;background:#f0f0f0"></div>
<div class="a" style="left:1275px;top:185px;width:1px;height:453px;background:#d0d0d0"></div>
<svg class="a" style="left:1280px;top:170px" width="12" height="10"><polygon points="2.8,8 6.3,2.8 9.8,8" fill="#707070" stroke="#707070" stroke-width="1.4" stroke-linejoin="round"/></svg>
<div class="a" style="left:1282px;top:184px;width:9px;height:18px;background:#707070;border-radius:4.5px"></div>
<svg class="a" style="left:1280px;top:626px" width="12" height="10"><polygon points="2.8,2.5 6.3,7.8 9.8,2.5" fill="#707070" stroke="#707070" stroke-width="1.4" stroke-linejoin="round"/></svg>
<div class="a" style="left:0;top:638px;width:1275px;height:8px;background:#f0f0f0;border-top:1px solid #d8d8d8"></div>
<div class="a" style="left:410px;top:637px;width:106px;height:9px;background:#fff"></div>
</body></html>
